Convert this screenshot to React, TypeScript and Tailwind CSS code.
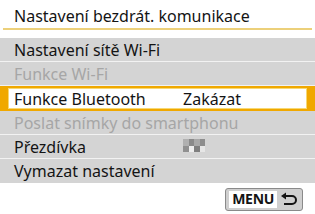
import React from "react"

const font = { fontFamily: '"Noto Sans", "Open Sans", sans-serif' }

function Row({
  label,
  value,
  disabled,
  last,
}: {
  label: string
  value?: React.ReactNode
  disabled?: boolean
  last?: boolean
}) {
  return (
    <div
      className={`flex h-[24px] items-center whitespace-nowrap pl-[14px] text-[16px] leading-none ${
        last ? "" : "border-b border-[#f2f2f2]"
      } ${disabled ? "text-[#a6a6a6]" : "text-[#141414]"}`}
    >
      <span className="w-[169px] shrink-0">{label}</span>
      {value}
    </div>
  )
}

function Mosaic() {
  const cells = [
    "#b0b0b0", "#8a8a8a", "#a8a8a8", "#8d8d8d",
    "#909090", "#eeeeee", "#7f7f7f", "#e6e6e6",
  ]
  return (
    <div className="mt-[-2px] grid h-[13px] w-[22px] grid-cols-4 blur-[0.5px]">
      {cells.map((c, i) => (
        <div key={i} style={{ backgroundColor: c }} />
      ))}
    </div>
  )
}

export default function App() {
  return (
    <div
      className="flex h-[214px] w-[315px] flex-col overflow-hidden bg-white"
      style={font}
    >
      <div className="flex h-[28px] items-end whitespace-nowrap pb-[4px] pl-[14px] text-[16px] leading-none text-[#141414]">
        Nastavení bezdrát. komunikace
      </div>
      <div className="mx-[3px] h-[2px] bg-[#ecd07a]" />
      <div className="h-[8px]" />

      <div className="flex flex-col bg-[#d4d4d4]">
        <Row label="Nastavení sítě Wi-Fi" />
        <Row label="Funkce Wi-Fi" disabled />
        <div className="flex h-[25px] items-stretch bg-[#f0a800] px-[8px] py-[2px]">
          <div className="flex flex-1 items-center whitespace-nowrap border border-[#f7d873] bg-white pl-[5px] text-[16px] leading-none text-[#141414]">
            <span className="w-[169px] shrink-0">Funkce Bluetooth</span>
            <span>Zakázat</span>
          </div>
        </div>
        <Row label="Poslat snímky do smartphonu" disabled />
        <Row label="Přezdívka" value={<Mosaic />} />
        <Row label="Vymazat nastavení" last />
      </div>

      <div className="flex flex-1 items-center justify-end pr-[12px] pt-[1px]">
        <div className="flex h-[23px] items-center rounded-[3px] border border-[#8a8a8a] bg-[#cfcfcf] pl-[3px] pr-[4px]">
          <span
            className="flex h-[17px] items-center bg-white px-[3px] text-[14px] font-bold leading-none tracking-[-0.3px] text-[#141414]"
            style={{ fontFamily: '"Open Sans", "Noto Sans", sans-serif' }}
          >
            MENU
          </span>
          <svg
            width="18"
            height="14"
            viewBox="0 0 18 14"
            className="ml-[3px]"
            fill="none"
          >
            <path
              d="M5 4 H12 A4 4 0 0 1 12 12 H4"
              stroke="#141414"
              strokeWidth="2"
            />
            <path d="M1 4 L6 0.5 L6 7.5 Z" fill="#141414" />
          </svg>
        </div>
      </div>
    </div>
  )
}
